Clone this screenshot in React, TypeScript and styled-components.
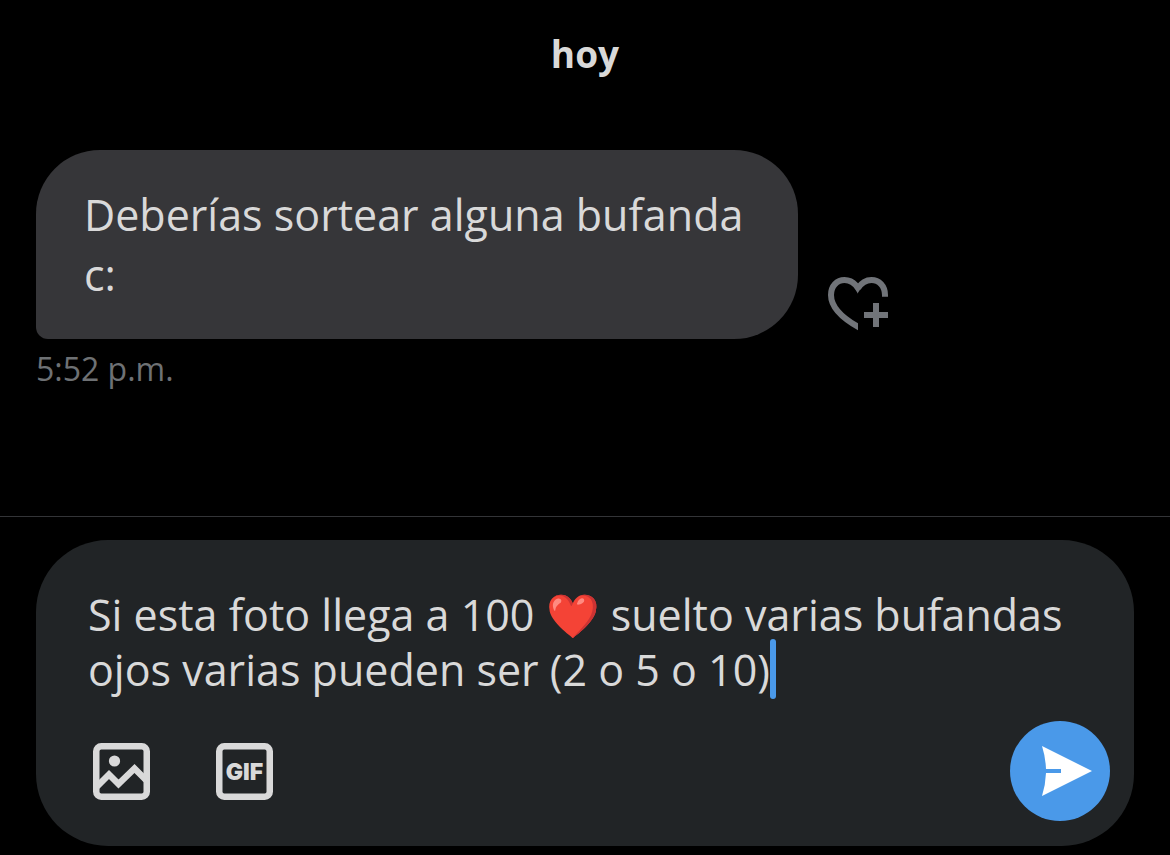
import React, { useState } from "react";
import styled, { createGlobalStyle } from "styled-components";

const GlobalStyle = createGlobalStyle`
  *, *::before, *::after { box-sizing: border-box; }
  body {
    margin: 0;
    background: #000;
    color: #d9d9d9;
    font-family: "Open Sans", "Noto Sans", sans-serif;
  }
`;

const Page = styled.main`
  display: flex;
  flex-direction: column;
  min-height: 100vh;
`;

const Conversation = styled.section`
  flex: 1;
  padding: 28px 36px 0;
`;

const DayHeading = styled.h1`
  margin: 0 0 70px;
  font-size: 37px;
  line-height: 52px;
  font-weight: 700;
  text-align: center;
`;

const MessageRow = styled.div`
  display: flex;
  align-items: flex-end;
  gap: 30px;
`;

const Bubble = styled.p`
  margin: 0;
  max-width: 762px;
  padding: 35px 48px 34px;
  border-radius: 64px 64px 64px 12px;
  background: #363639;
  font-size: 43px;
  line-height: 60px;
`;

const Time = styled.time`
  display: block;
  margin-top: 8px;
  color: #6e7174;
  font-size: 32px;
  line-height: 44px;
`;

const IconButton = styled.button`
  display: flex;
  padding: 0;
  border: 0;
  background: none;
  color: inherit;
  cursor: pointer;
`;

const ReactButton = styled(IconButton)`
  padding-bottom: 8px;
  color: #717479;
`;

const ComposerBar = styled.footer`
  padding: 23px 36px 9px;
  border-top: 1px solid #333437;
`;

const Composer = styled.form`
  padding: 47px 24px 25px 52px;
  border-radius: 72px;
  background: #212426;
`;

const Field = styled.div`
  position: relative;
`;

const MessageInput = styled.textarea`
  display: block;
  width: 100%;
  height: 110px;
  padding: 0;
  border: 0;
  outline: 0;
  resize: none;
  overflow: hidden;
  background: none;
  color: #d9d9d9;
  caret-color: #4a99e9;
  font-family: inherit;
  font-size: 43px;
  line-height: 55px;
`;

const Caret = styled.span`
  position: absolute;
  left: 682px;
  top: 52px;
  width: 6px;
  height: 60px;
  border-radius: 3px;
  background: #4a99e9;
`;

const Toolbar = styled.div`
  display: flex;
  align-items: center;
  gap: 66px;
  margin-top: 24px;
  padding-left: 5px;
`;

const SendButton = styled(IconButton)`
  align-items: center;
  justify-content: center;
  width: 100px;
  height: 100px;
  margin-left: auto;
  border-radius: 50%;
  background: #4a99e9;
  color: #fff;
`;

const HeartPlusIcon = () => (
  <svg width="60" height="54" viewBox="0 0 60 54" fill="none" stroke="currentColor" strokeWidth="6" aria-hidden="true">
    <clipPath id="heart-left"><rect x="0" y="0" width="30" height="54" /></clipPath>
    <path d="M57 19.7V18C57 9 51 3 43.5 3C37.5 3 33 6.5 30 11.2" />
    <path d="M33 16L30 11.2C27 6.5 22.5 3 16.5 3C9 3 3 9 3 18C3 31 15 42 34 52" clipPath="url(#heart-left)" />
    <path d="M30 6.3L27 11.2L30 15.8L33 11.2Z" fill="currentColor" stroke="none" />
    <path d="M36 38H60M48 26V50" />
  </svg>
);

const ImageIcon = () => (
  <svg width="57" height="57" viewBox="0 0 57 57" fill="none" stroke="currentColor" strokeWidth="6.5" aria-hidden="true">
    <rect x="3.25" y="3.25" width="50.5" height="50.5" rx="5" />
    <circle cx="21.5" cy="18" r="5.6" fill="currentColor" stroke="none" />
    <path d="M4 43.5L16 31.5L25.5 41L41.5 25.5L53 37" />
  </svg>
);

const GifIcon = () => (
  <svg width="57" height="57" viewBox="0 0 57 57" fill="none" stroke="currentColor" strokeWidth="6.5" aria-hidden="true">
    <rect x="3.25" y="3.25" width="50.5" height="50.5" rx="5" />
    <text x="28.5" y="37" textAnchor="middle" fontFamily="Inter, sans-serif" fontSize="23" fontWeight="900" fill="currentColor" stroke="none">GIF</text>
  </svg>
);

const SendIcon = () => (
  <svg width="100" height="100" viewBox="0 0 100 100" aria-hidden="true">
    <path fill="currentColor" d="M32 25L82 50L32 75Q35.5 64 36 52H51V48H36Q35.5 36 32 25Z" />
  </svg>
);

export default function App() {
  const [draft, setDraft] = useState(
    "Si esta foto llega a 100 ❤️ suelto varias bufandas ojos varias pueden ser (2 o 5 o 10)"
  );

  return (
    <>
      <GlobalStyle />
      <Page>
        <Conversation>
          <DayHeading>hoy</DayHeading>
          <MessageRow>
            <Bubble>Deberías sortear alguna bufanda c:</Bubble>
            <ReactButton type="button" aria-label="Reaccionar"><HeartPlusIcon /></ReactButton>
          </MessageRow>
          <Time dateTime="17:52">5:52 p.m.</Time>
        </Conversation>
        <ComposerBar>
          <Composer onSubmit={(e) => e.preventDefault()}>
            <Field>
              <MessageInput aria-label="Mensaje" spellCheck={false} value={draft} onChange={(e) => setDraft(e.target.value)} />
              <Caret />
            </Field>
            <Toolbar>
              <IconButton type="button" aria-label="Imagen"><ImageIcon /></IconButton>
              <IconButton type="button" aria-label="GIF"><GifIcon /></IconButton>
              <SendButton type="submit" aria-label="Enviar"><SendIcon /></SendButton>
            </Toolbar>
          </Composer>
        </ComposerBar>
      </Page>
    </>
  );
}
